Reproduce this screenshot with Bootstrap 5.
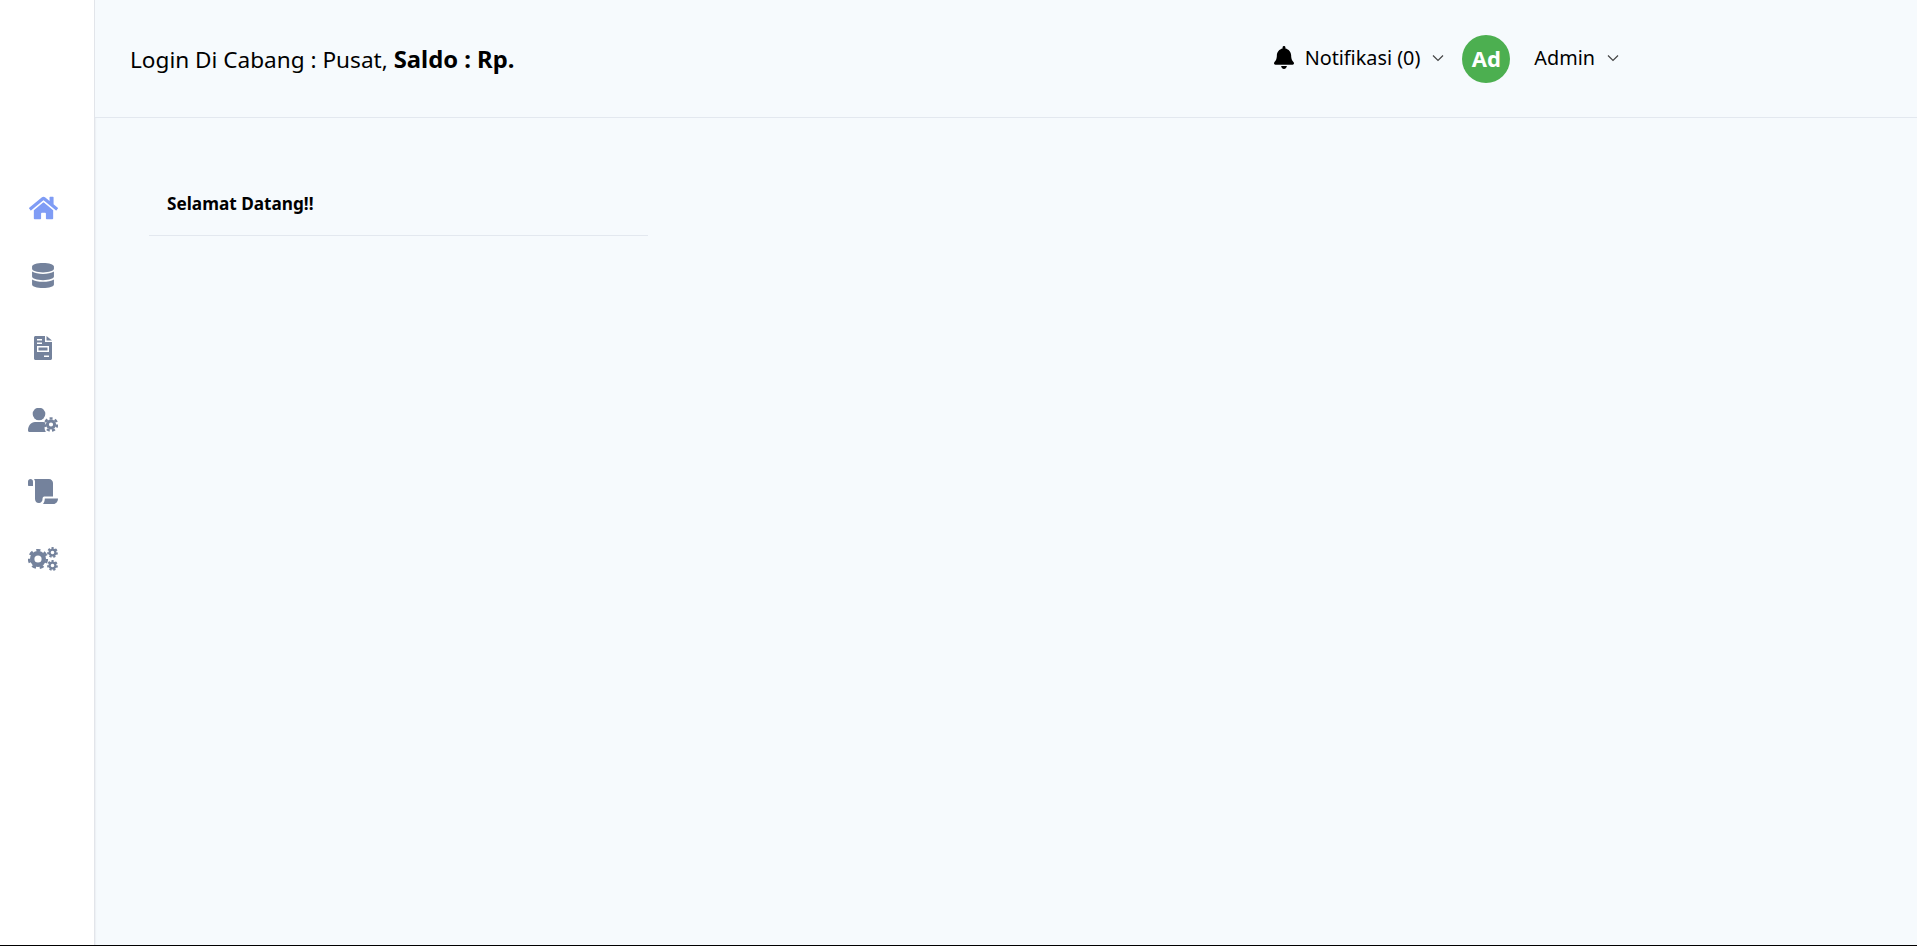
<!DOCTYPE html>
<html lang="id">
<head>
  <meta charset="UTF-8">
  <meta name="viewport" content="width=device-width, initial-scale=1.0">
  <title>Dashboard</title>
  <link href="https://cdn.jsdelivr.net/npm/bootstrap@5.3.0/dist/css/bootstrap.min.css" rel="stylesheet">
  <style>
    body {
      font-family: "Noto Sans", "Open Sans", sans-serif;
      color: #000;
      background: #f6fafd;
    }
    .app-wrap {
      height: 946px;
      border-bottom: 1px solid #000;
      overflow: hidden;
    }
    .side-bar {
      width: 95px;
      flex-shrink: 0;
      background: #fff;
      border-right: 1px solid #e2e5ea;
      box-shadow: 1px 0 1px #eef1f5;
      padding: 195px 8px 0 0;
    }
    .side-link {
      display: flex;
      justify-content: center;
      color: #74829c;
      margin-bottom: 48px;
      line-height: 0;
    }
    .side-link.is-active { color: #7f9cf5; }
    .side-link:nth-child(1) { margin-bottom: 42px; }
    .side-link:nth-child(4) { margin-bottom: 47px; }
    .side-link:nth-child(5) { margin-bottom: 43px; }
    .top-head {
      height: 118px;
      padding: 0 298px 0 35px;
      border-bottom: 1px solid #e3e8ef;
      background: #f6fafd;
    }
    .branch-text { font-size: 22.6px; margin-top: 3px; }
    .branch-text b { font-size: 23.8px; }
    .head-item { font-size: 19.8px; color: #000; text-decoration: none; margin-top: -2px; }
    .bell-gap { margin-right: 11px; }
    .chev { margin-left: 12px; color: #444; }
    .avatar-ad {
      width: 48px;
      height: 48px;
      background: #4caf50;
      color: #fff;
      font-size: 22px;
      font-weight: 700;
      margin: 0 24px 0 18px;
    }
    .main-pane { padding: 61px 0 0 54px; }
    .welcome-card { width: 499px; background: transparent; border: 0; border-radius: 0; }
    .welcome-card .card-header {
      background: transparent;
      border-bottom: 1px solid #e3e8ef;
      border-radius: 0;
      padding: 12px 18px 18px;
      font-size: 17.2px;
      font-weight: 700;
    }
  </style>
</head>
<body>
<div class="app-wrap d-flex">
  <!-- sidebar -->
  <nav class="side-bar">
    <a href="#" class="side-link is-active">
      <svg width="29" height="26" viewBox="0 0 576 512" fill="currentColor"><path d="M280.37 148.26L96 300.11V464a16 16 0 0 0 16 16l112.06-.29a16 16 0 0 0 15.92-16V368a16 16 0 0 1 16-16h64a16 16 0 0 1 16 16v95.64a16 16 0 0 0 16 16.05L464 480a16 16 0 0 0 16-16V300L295.67 148.26a12.19 12.19 0 0 0-15.3 0zM571.6 251.47L488 182.56V44.05a12 12 0 0 0-12-12h-56a12 12 0 0 0-12 12v72.61L318.47 43a48 48 0 0 0-61 0L4.34 251.47a12 12 0 0 0-1.6 16.9l25.5 31A12 12 0 0 0 45.15 301l235.22-193.74a12.19 12.19 0 0 1 15.3 0L530.9 301a12 12 0 0 0 16.9-1.6l25.5-31a12 12 0 0 0-1.7-16.93z"/></svg>
    </a>
    <a href="#" class="side-link">
      <svg width="22" height="25" viewBox="0 0 448 512" fill="currentColor"><path d="M448 73.143v45.714C448 159.143 347.667 192 224 192S0 159.143 0 118.857V73.143C0 32.857 100.333 0 224 0s224 32.857 224 73.143zM448 176v102.857C448 319.143 347.667 352 224 352S0 319.143 0 278.857V176c48.125 33.143 136.208 48.572 224 48.572S399.874 209.143 448 176zm0 160v102.857C448 479.143 347.667 512 224 512S0 479.143 0 438.857V336c48.125 33.143 136.208 48.572 224 48.572S399.874 369.143 448 336z"/></svg>
    </a>
    <a href="#" class="side-link">
      <svg width="18" height="24" viewBox="0 0 18 24" fill="currentColor"><path fill-rule="evenodd" d="M1.500 0H11v6h7v16.500c0 .8-.7 1.500-1.500 1.500h-15C.7 24 0 23.300 0 22.500V1.500C0 .7.7 0 1.500 0zM3 3v1.500h5V3zm0 3.500V8h5V6.500zM3 10v6h12v-6zm1.500 1.500h9v3h-9zM10 19.500V21h5v-1.500z"/><path d="M12.500 0 18 4.500h-5.500z"/></svg>
    </a>
    <a href="#" class="side-link">
      <svg width="30" height="24" viewBox="0 0 30 24" fill="currentColor"><circle cx="11" cy="6" r="6.300"/><path d="M7 14h8c1 0 2 .2 2.800.5-1.800 2.500-1.800 6 0 9.500H1.500C.7 24 0 23.300 0 22.500 0 17.800 3 14 7 14z"/><circle cx="23" cy="16.500" r="3.600" fill="none" stroke="currentColor" stroke-width="3"/><circle cx="23" cy="16.500" r="6.100" fill="none" stroke="currentColor" stroke-width="2.400" stroke-dasharray="3 2.320"/></svg>
    </a>
    <a href="#" class="side-link">
      <svg width="30" height="25" viewBox="0 0 30 25" fill="currentColor"><path d="M2.500 0C1.100 0 0 1.100 0 2.500V6c0 .6.400 1 1 1h4V2.500C5 1.100 3.900 0 2.500 0z"/><path d="M6 0c.6.700 1 1.600 1 2.500V20c0 2.500 2 4.500 4.500 4 2-.4 3-2 3-4 0-1.500.7-2.500 1.700-2.500H25V4c0-2.200-1.800-4-4-4z"/><path d="M16.800 19.500c0 2-.6 4-1.800 5.500h10.500c2.500 0 4.500-2.500 4.500-5.500z"/></svg>
    </a>
    <a href="#" class="side-link">
      <svg width="30" height="24" viewBox="0 0 30 24" fill="currentColor"><circle cx="10" cy="12" r="5.800" fill="none" stroke="currentColor" stroke-width="4.400"/><circle cx="10" cy="12" r="8.800" fill="none" stroke="currentColor" stroke-width="2.600" stroke-dasharray="4.100 3.800"/><circle cx="24.500" cy="5.500" r="2.900" fill="none" stroke="currentColor" stroke-width="2.200"/><circle cx="24.500" cy="5.500" r="4.500" fill="none" stroke="currentColor" stroke-width="1.800" stroke-dasharray="2.200 1.730"/><circle cx="24.500" cy="18.500" r="2.900" fill="none" stroke="currentColor" stroke-width="2.200"/><circle cx="24.500" cy="18.500" r="4.500" fill="none" stroke="currentColor" stroke-width="1.800" stroke-dasharray="2.200 1.730"/></svg>
    </a>
  </nav>

  <div class="flex-grow-1">
    <!-- header -->
    <header class="top-head d-flex align-items-center justify-content-between">
      <div class="branch-text">Login Di Cabang : Pusat, <b>Saldo : Rp.</b></div>
      <div class="d-flex align-items-center">
        <a href="#" class="head-item d-flex align-items-center">
          <svg class="bell-gap" width="20" height="23" viewBox="0 0 448 512" fill="#000"><path d="M224 512c35.320 0 63.970-28.650 63.970-64H160.030c0 35.350 28.650 64 63.970 64zm215.390-149.710c-19.320-20.760-55.470-51.990-55.470-154.290 0-77.700-54.480-139.900-127.940-155.160V32c0-17.670-14.320-32-31.980-32s-31.980 14.330-31.980 32v20.840C118.560 68.100 64.080 130.300 64.080 208c0 102.300-36.150 133.530-55.470 154.290-6 6.450-8.660 14.160-8.610 21.710.11 16.400 12.980 32 32.100 32h383.800c19.120 0 32-15.600 32.100-32 .05-7.550-2.610-15.270-8.610-21.710z"/></svg>
          <span>Notifikasi (0)</span>
          <svg class="chev" width="12" height="8" viewBox="0 0 12 8" fill="none" stroke="currentColor" stroke-width="1.200"><path d="M1 1.500 6 6.500 11 1.500"/></svg>
        </a>
        <div class="avatar-ad rounded-circle d-flex align-items-center justify-content-center">Ad</div>
        <a href="#" class="head-item d-flex align-items-center">
          <span>Admin</span>
          <svg class="chev" width="12" height="8" viewBox="0 0 12 8" fill="none" stroke="currentColor" stroke-width="1.200"><path d="M1 1.500 6 6.500 11 1.500"/></svg>
        </a>
      </div>
    </header>

    <!-- content -->
    <main class="main-pane">
      <div class="card welcome-card">
        <div class="card-header">Selamat Datang!!</div>
      </div>
    </main>
  </div>
</div>
<script src="https://cdn.jsdelivr.net/npm/bootstrap@5.3.0/dist/js/bootstrap.bundle.min.js"></script>
</body>
</html>
